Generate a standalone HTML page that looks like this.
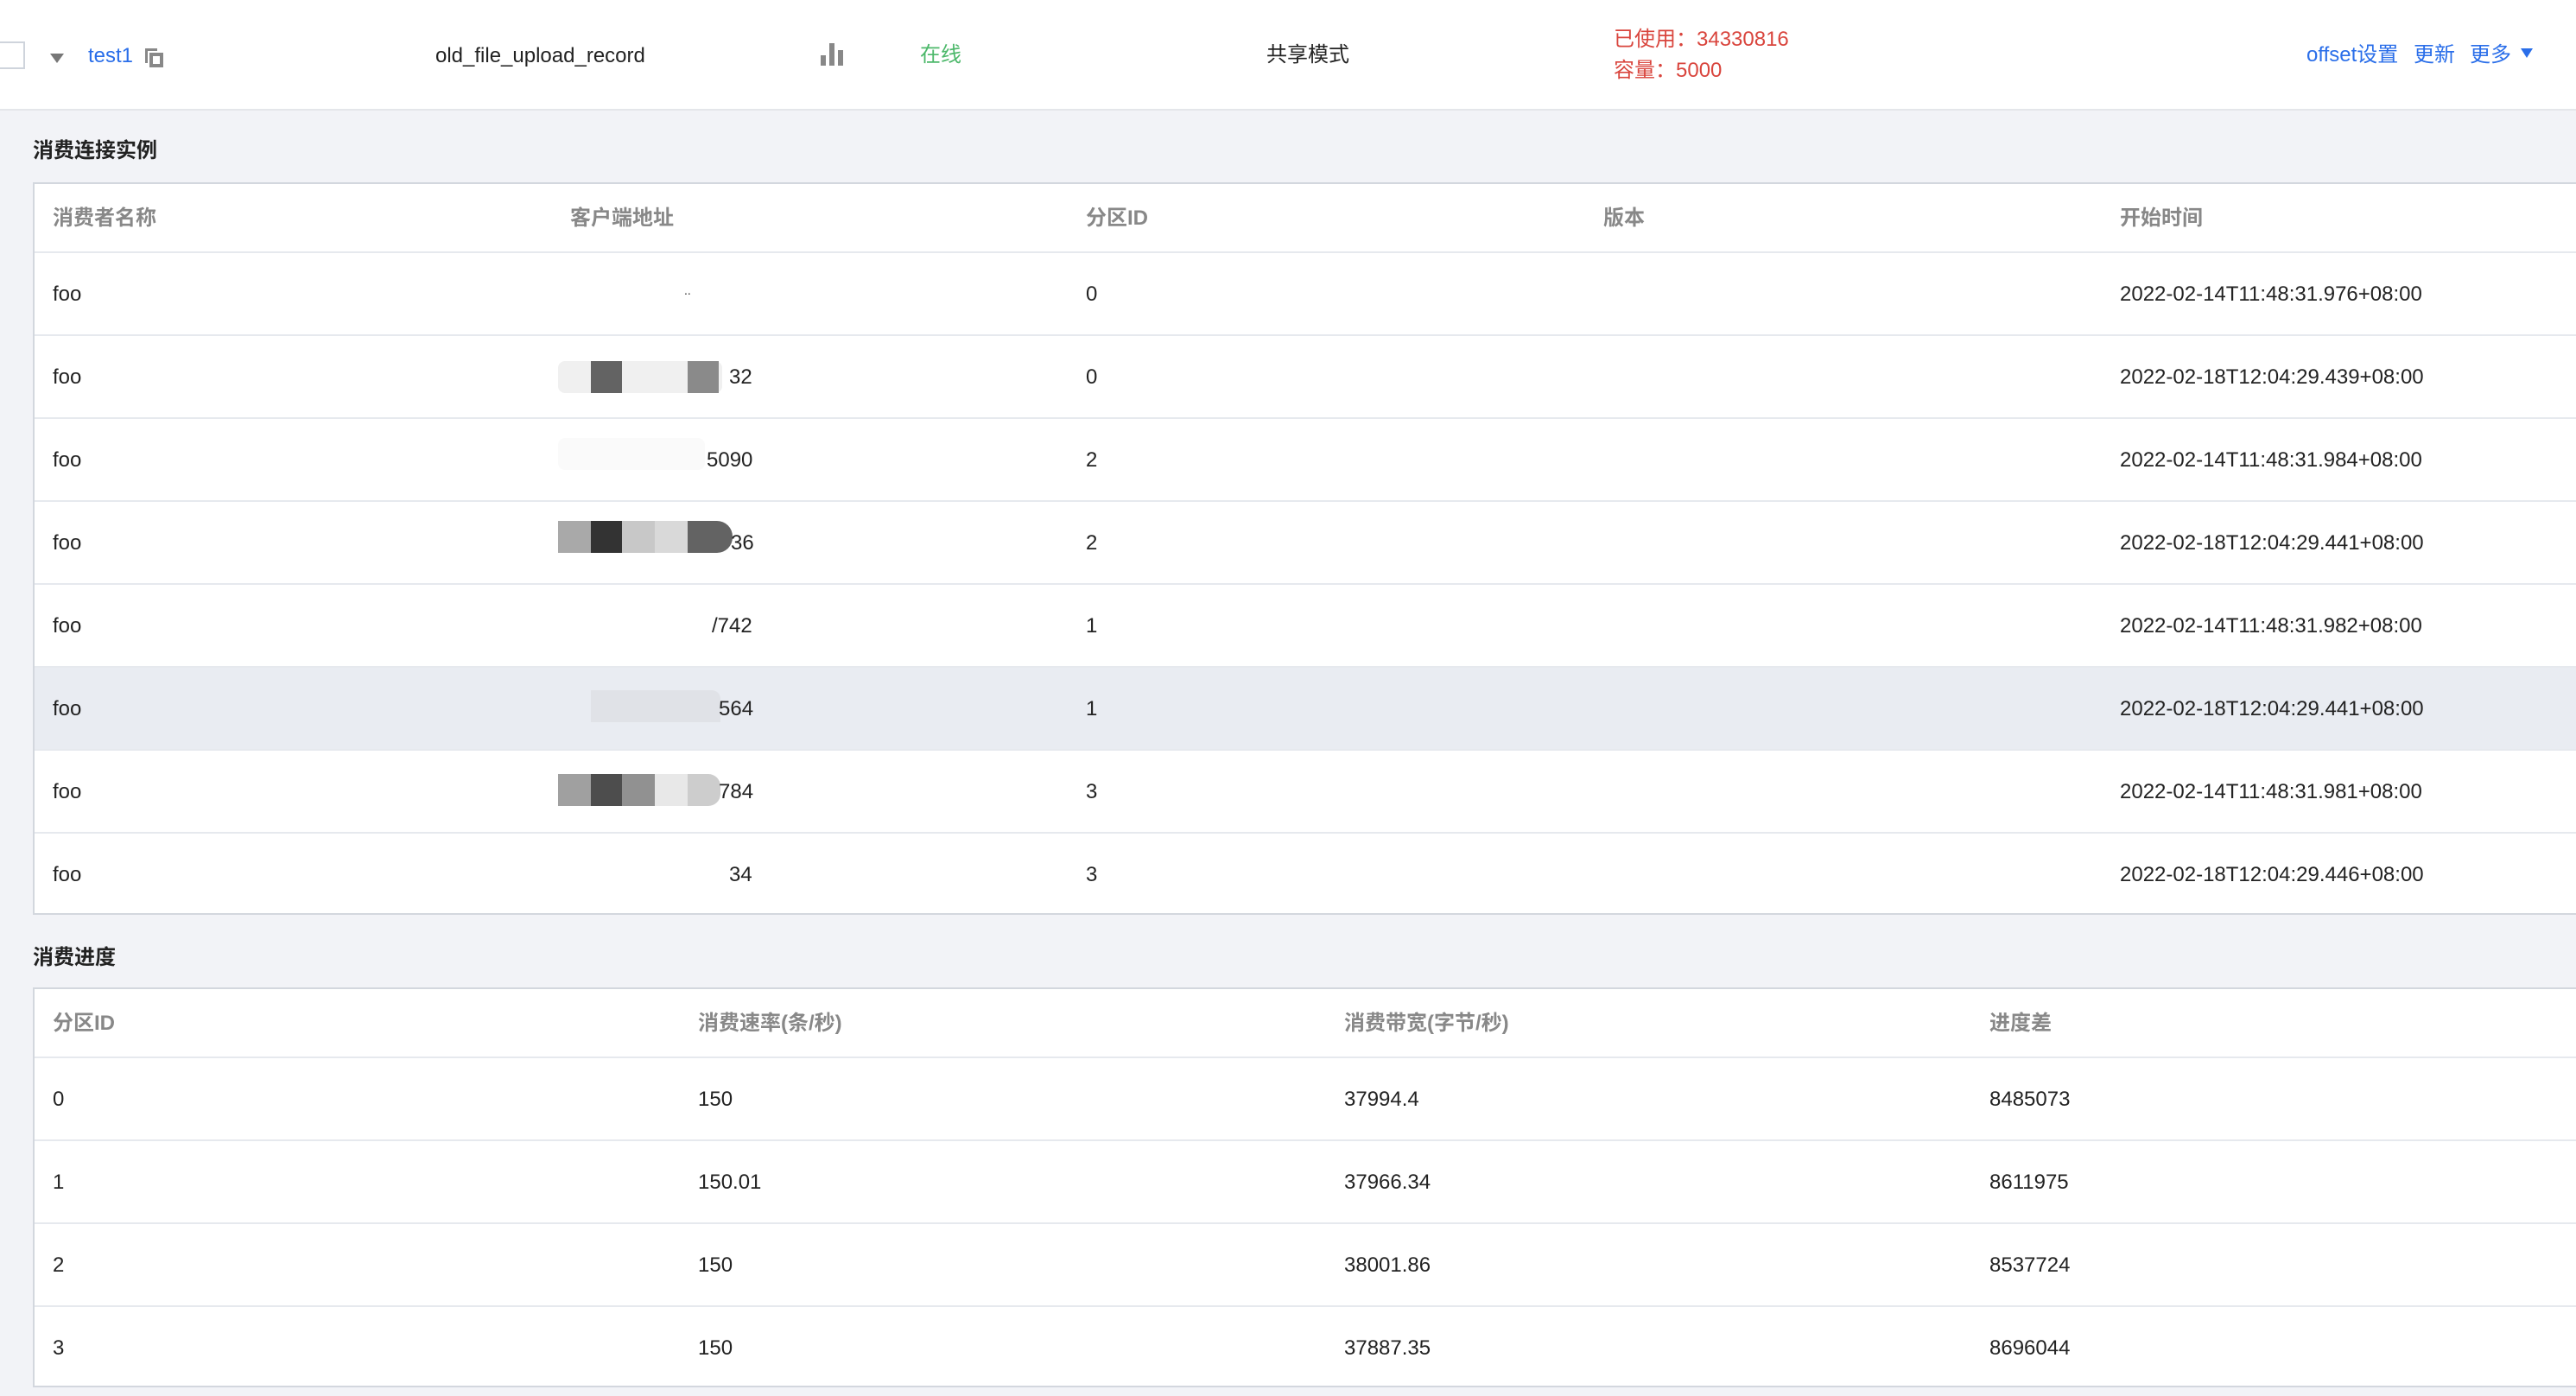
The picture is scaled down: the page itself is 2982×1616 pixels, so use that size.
<!DOCTYPE html>
<html><head><meta charset="utf-8"><style>
*{margin:0;padding:0;box-sizing:border-box}
body{width:2982px;height:1616px;background:#f2f3f7;font-family:"Liberation Sans","Noto Sans CJK SC",sans-serif;font-size:24px;color:#222;position:relative;overflow:hidden}
.a{position:absolute;white-space:nowrap;line-height:1}
.top{position:absolute;left:0;top:0;width:2982px;height:128px;background:#fff;border-bottom:2px solid #e4e6ea}
.tbl{position:absolute;left:38px;width:2960px;background:#fff;border:2px solid #d3d7de}
.row{position:absolute;left:0;width:100%;border-top:2px solid #e6e9ee}
.hd{color:#888;font-weight:bold}
.blk{position:absolute;height:37px}
</style></head><body>
<div class="top"></div>
<div class="a" style="left:-4px;top:48px;width:33px;height:32px;border:2px solid #cfd4dc;background:#fff"></div>
<svg class="a" style="left:58px;top:62px" width="16" height="11"><polygon points="0,0 16,0 8,11" fill="#777"/></svg>
<div class="a" style="left:102px;top:53px;color:#2a6ee9;font-size:24px">test1</div>
<svg class="a" style="left:166px;top:54px" width="24" height="24"><path d="M2 2h14v3H5v14H2z" fill="#888"/><rect x="9" y="9" width="12" height="13" fill="none" stroke="#888" stroke-width="4"/></svg>
<div class="a" style="left:504px;top:53px">old_file_upload_record</div>
<svg class="a" style="left:950px;top:50px" width="26" height="27"><rect x="0" y="14" width="6" height="12" fill="#888"/><rect x="10" y="0" width="6" height="26" fill="#888"/><rect x="20" y="8" width="6" height="18" fill="#888"/></svg>
<div class="a" style="left:1065px;top:52px;color:#4cb86a">在线</div>
<div class="a" style="left:1466px;top:52px">共享模式</div>
<div class="a" style="left:1868px;top:34px;color:#d9453d">已使用：34330816</div>
<div class="a" style="left:1868px;top:70px;color:#d9453d">容量：5000</div>
<div class="a" style="left:2670px;top:52px;color:#2a6ee9">offset设置</div>
<div class="a" style="left:2794px;top:52px;color:#2a6ee9">更新</div>
<div class="a" style="left:2859px;top:52px;color:#2a6ee9">更多</div>
<svg class="a" style="left:2918px;top:56px" width="14" height="11"><polygon points="0,0 14,0 7,11" fill="#2a6ee9"/></svg>

<div class="a" style="left:38px;top:163px;font-weight:bold">消费连接实例</div>
<div class="tbl" style="top:211px;height:848px">
 <div class="a hd" style="left:21px;top:28px">消费者名称</div>
 <div class="a hd" style="left:620px;top:28px">客户端地址</div>
 <div class="a hd" style="left:1217px;top:28px">分区ID</div>
 <div class="a hd" style="left:1816px;top:28px">版本</div>
 <div class="a hd" style="left:2414px;top:28px">开始时间</div>
 <div class="row" style="top:78px;height:96px"><div class="a" style="left:21px;top:36px">foo</div><div class="a" style="left:752px;top:36px;font-size:14px">.. </div><div class="a" style="left:1217px;top:36px">0</div><div class="a" style="left:2414px;top:36px">2022-02-14T11:48:31.976+08:00</div></div>
 <div class="row" style="top:174px;height:96px"><div class="a" style="left:21px;top:36px">foo</div>
  <div class="blk" style="left:606px;top:29px;width:190px;background:#f0f0f0;border-radius:8px"></div><div class="blk" style="left:644px;top:29px;width:36px;background:#636363"></div><div class="blk" style="left:756px;top:29px;width:36px;background:#8a8a8a"></div>
  <div class="a" style="left:804px;top:36px">32</div><div class="a" style="left:1217px;top:36px">0</div><div class="a" style="left:2414px;top:36px">2022-02-18T12:04:29.439+08:00</div></div>
 <div class="row" style="top:270px;height:96px"><div class="a" style="left:21px;top:36px">foo</div>
  <div class="blk" style="left:606px;top:22px;width:170px;background:#fafafa;border-radius:8px"></div>
  <div class="a" style="left:778px;top:36px">5090</div><div class="a" style="left:1217px;top:36px">2</div><div class="a" style="left:2414px;top:36px">2022-02-14T11:48:31.984+08:00</div></div>
 <div class="row" style="top:366px;height:96px"><div class="a" style="left:21px;top:36px">foo</div>
  <div class="blk" style="left:606px;top:22px;width:38px;background:#a9a9a9"></div><div class="blk" style="left:644px;top:22px;width:36px;background:#333"></div><div class="blk" style="left:680px;top:22px;width:38px;background:#c8c8c8"></div><div class="blk" style="left:718px;top:22px;width:38px;background:#d9d9d9"></div><div class="blk" style="left:756px;top:22px;width:52px;background:#636363;border-radius:0 18px 18px 0"></div>
  <div class="a" style="left:806px;top:36px">36</div><div class="a" style="left:1217px;top:36px">2</div><div class="a" style="left:2414px;top:36px">2022-02-18T12:04:29.441+08:00</div></div>
 <div class="row" style="top:462px;height:96px"><div class="a" style="left:21px;top:36px">foo</div><div class="a" style="left:784px;top:36px">/742</div><div class="a" style="left:1217px;top:36px">1</div><div class="a" style="left:2414px;top:36px">2022-02-14T11:48:31.982+08:00</div></div>
 <div class="row" style="top:558px;height:96px;background:#e9ecf2"><div class="a" style="left:21px;top:36px">foo</div>
  <div class="blk" style="left:644px;top:26px;width:150px;background:#e0e2e7;border-radius:0 10px 0 0"></div>
  <div class="a" style="left:792px;top:36px">564</div><div class="a" style="left:1217px;top:36px">1</div><div class="a" style="left:2414px;top:36px">2022-02-18T12:04:29.441+08:00</div></div>
 <div class="row" style="top:654px;height:96px"><div class="a" style="left:21px;top:36px">foo</div>
  <div class="blk" style="left:606px;top:27px;width:38px;background:#a0a0a0"></div><div class="blk" style="left:644px;top:27px;width:36px;background:#4d4d4d"></div><div class="blk" style="left:680px;top:27px;width:38px;background:#919191"></div><div class="blk" style="left:718px;top:27px;width:38px;background:#e8e8e8"></div><div class="blk" style="left:756px;top:27px;width:38px;background:#cdcdcd;border-radius:0 14px 14px 0"></div>
  <div class="a" style="left:792px;top:36px">784</div><div class="a" style="left:1217px;top:36px">3</div><div class="a" style="left:2414px;top:36px">2022-02-14T11:48:31.981+08:00</div></div>
 <div class="row" style="top:750px;height:96px"><div class="a" style="left:21px;top:36px">foo</div><div class="a" style="left:804px;top:36px">34</div><div class="a" style="left:1217px;top:36px">3</div><div class="a" style="left:2414px;top:36px">2022-02-18T12:04:29.446+08:00</div></div>
</div>

<div class="a" style="left:38px;top:1097px;font-weight:bold">消费进度</div>
<div class="tbl" style="top:1143px;height:463px">
 <div class="a hd" style="left:21px;top:28px">分区ID</div>
 <div class="a hd" style="left:768px;top:28px">消费速率(条/秒)</div>
 <div class="a hd" style="left:1516px;top:28px">消费带宽(字节/秒)</div>
 <div class="a hd" style="left:2263px;top:28px">进度差</div>
 <div class="row" style="top:78px;height:96px"><div class="a" style="left:21px;top:36px">0</div><div class="a" style="left:768px;top:36px">150</div><div class="a" style="left:1516px;top:36px">37994.4</div><div class="a" style="left:2263px;top:36px">8485073</div></div>
 <div class="row" style="top:174px;height:96px"><div class="a" style="left:21px;top:36px">1</div><div class="a" style="left:768px;top:36px">150.01</div><div class="a" style="left:1516px;top:36px">37966.34</div><div class="a" style="left:2263px;top:36px">8611975</div></div>
 <div class="row" style="top:270px;height:96px"><div class="a" style="left:21px;top:36px">2</div><div class="a" style="left:768px;top:36px">150</div><div class="a" style="left:1516px;top:36px">38001.86</div><div class="a" style="left:2263px;top:36px">8537724</div></div>
 <div class="row" style="top:366px;height:96px"><div class="a" style="left:21px;top:36px">3</div><div class="a" style="left:768px;top:36px">150</div><div class="a" style="left:1516px;top:36px">37887.35</div><div class="a" style="left:2263px;top:36px">8696044</div></div>
</div>
</body></html>
